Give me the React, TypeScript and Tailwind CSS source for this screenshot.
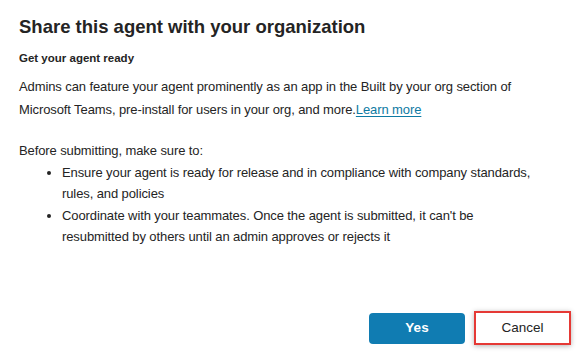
import React from 'react'

const App: React.FC = () => {
  return (
    <div
      className="w-[581px] h-[358px] bg-white text-[#242424] flex flex-col"
      style={{ fontFamily: '"Segoe UI", "Liberation Sans", sans-serif' }}
    >
      <div className="px-[19px] pt-[13px] flex-1">
        <h1 className="text-[18.5px] leading-[28px] font-semibold">
          Share this agent with your organization
        </h1>
        <p className="mt-[9px] text-[11.5px] leading-[16px] font-semibold">Get your agent ready</p>

        <p className="mt-[9px] text-[13px] leading-[23px] tracking-[-0.1px]">
          Admins can feature your agent prominently as an app in the Built by your org section of
          Microsoft Teams, pre-install for users in your org, and more.
          <a href="#" className="text-[#0e7aa3] underline underline-offset-2">
            Learn more
          </a>
        </p>

        <p className="mt-[19px] text-[13px] leading-[21.5px] tracking-[-0.1px]">
          Before submitting, make sure to:
        </p>
        <ul className="list-disc pl-[43px] text-[13px] leading-[21.5px] tracking-[-0.1px]">
          <li>
            Ensure your agent is ready for release and in compliance with company standards,
            rules, and policies
          </li>
          <li>
            Coordinate with your teammates. Once the agent is submitted, it can't be
            <br />
            resubmitted by others until an admin approves or rejects it
          </li>
        </ul>
      </div>

      <div className="flex justify-end items-center gap-[9px] pr-[10px] pb-[13px]">
        <button className="w-[96px] h-[31px] rounded-[4px] bg-[#107cb2] text-white text-[13.5px] font-semibold">
          Yes
        </button>
        <button className="w-[97px] h-[34px] bg-white border-2 border-[#e53935] shadow-[0_1px_5px_rgba(0,0,0,0.3)] text-[13.5px]">
          Cancel
        </button>
      </div>
    </div>
  )
}

export default App
